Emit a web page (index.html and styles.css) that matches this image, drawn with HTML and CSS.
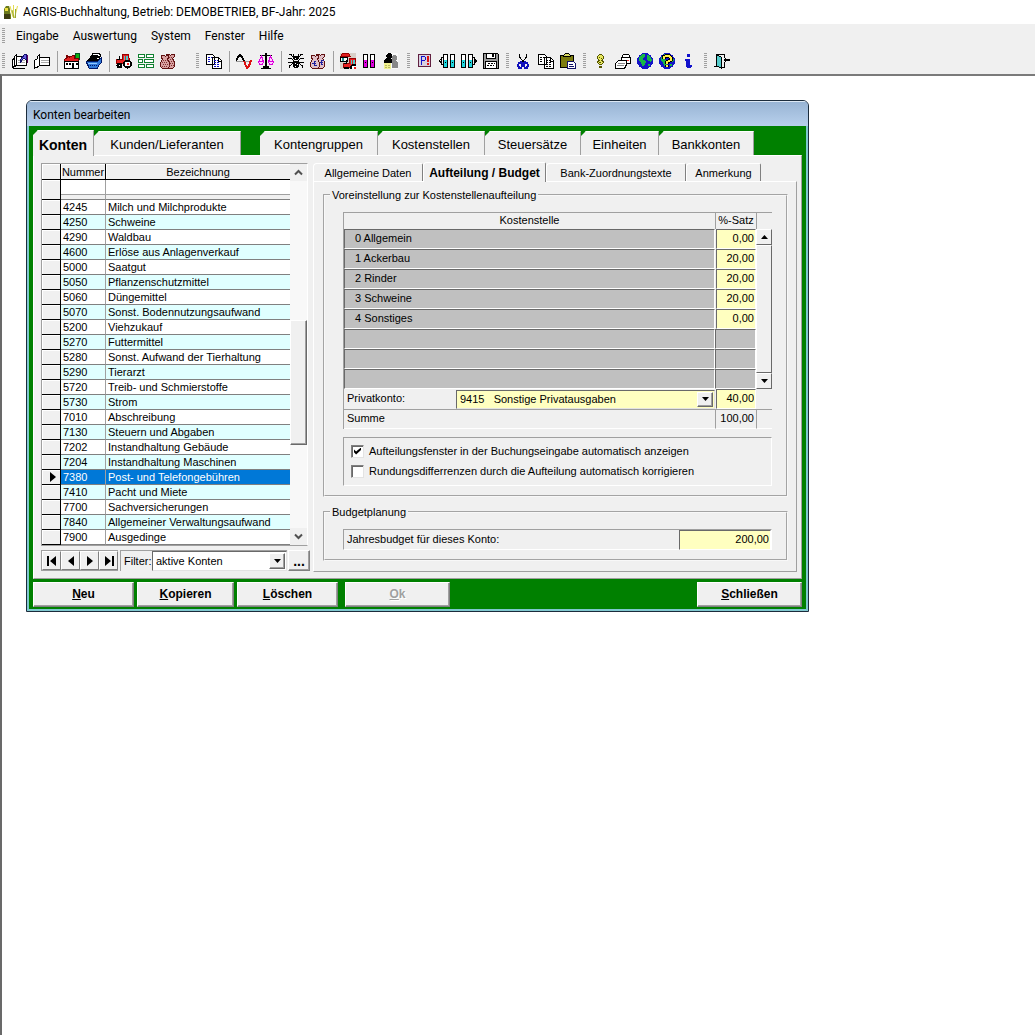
FILE: index.html
```html
<!DOCTYPE html>
<html lang="de">
<head>
<meta charset="utf-8">
<meta name="viewport" content="width=device-width, initial-scale=1">
<title>AGRIS-Buchhaltung, Betrieb: DEMOBETRIEB, BF-Jahr: 2025</title>
<link rel="stylesheet" href="styles.css">
</head>
<body>
<svg class="defs" aria-hidden="true">
  <symbol id="binders" viewBox="0 0 13 16">
    <path fill="#fff" stroke="#000" d="M.5 1.500h4v13h-4zM7.500 1.500h4v13h-4z"/>
    <path class="tint" d="M1 7h3v7H1zM8 7h3v7H8z"/><path stroke="#000" d="M2 9.500h1M9 9.500h1"/>
  </symbol>
  <symbol id="sheets" viewBox="0 0 16 16">
    <path fill="#fff" stroke="#000" d="M.5 1.500h6l2 2v8h-8zM6.500 4.500h6l3 3v8h-9z"/>
    <path class="ink" d="M2 4.500h4M2 6.500h3M2 8.500h3M8 7.500h4M8 9.500h5M8 11.500h6M8 13.500h6" stroke-dasharray="2 1"/>
    <path stroke="#000" d="M12.500 5v3h3"/>
  </symbol>
  <symbol id="sacks" viewBox="0 0 16 16">
    <path class="cloth" stroke="#601010" d="M6.500 1.500h3l1 1 1-1h3v2l-2 2 2 3v5l-2 2h-4l-2-3z"/>
    <path class="cloth" stroke="#601010" d="M1.500 2.500h3l1 1 1-1h2v2l-1 2 2 3v4l-2 2h-5l-2-2v-4l2-3-1-2z"/>
    <path class="marks" stroke-dasharray="1 1" d="M3 7.500h5M2 9.500h6M3 11.500h5M2 13.500h6M9 4.500h4M10 6.500h3M9 8.500h5M10 10.500h4M9 12.500h5"/>
  </symbol>
  <symbol id="tractor" viewBox="0 0 16 16">
    <path fill="#e82020" stroke="#900" d="M.5 6.500h6v-5h6l1 6-4 3h-9z"/>
    <path fill="#50c8c8" d="M8 3h4v4H8z"/>
    <path fill="#e82020" d="M9 3h1v4H9z"/>
    <path stroke="#000" d="M3.500 3v3M1 6.500h3"/>
    <circle cx="11.500" cy="11" r="3.500" fill="#fff" stroke="#000" stroke-width="2"/>
    <circle cx="3.500" cy="12.500" r="2" fill="#fff" stroke="#000" stroke-width="2"/>
    <path fill="#e82020" d="M11 10h2v2h-2z"/>
  </symbol>
  <symbol id="globe" viewBox="0 0 16 16">
    <circle cx="8" cy="8" r="8" fill="#1414c8"/>
    <path fill="#18b848" d="M2 4l3-3h3v2L6 5v2h2l1 2-2 4H5L4 9 2 8zM10 2l3 1 2 4-1 3-2-2-2-1zM11 11h2v2h-2z"/>
  </symbol>
</svg>

<header class="titlebar">
  <svg class="logo" viewBox="0 0 16 16" aria-hidden="true">
    <path fill="#6b7a1c" d="M1 5l2-3h3l1 3v3l1 3v4H1v-4z"/><path fill="#3c3c10" d="M1 10h6v5H1z"/><path fill="#f0e040" d="M2 4h3v3H2z"/>
    <path stroke="#e4dc50" d="M10.500 1v13M14.500 2l-3 12M7 2l3 11"/><path stroke="#98a838" d="M12.500 5v9M9 6l2 8"/>
  </svg>
  <h1>AGRIS-Buchhaltung, Betrieb: DEMOBETRIEB, BF-Jahr: 2025</h1>
</header>

<nav class="menubar">
  <span class="grip"></span>
  <button>Eingabe</button><button>Auswertung</button><button>System</button><button>Fenster</button><button>Hilfe</button>
</nav>

<div class="toolbars">
  <div class="toolbar">
    <span class="grip"></span>
    <button aria-label="Journal"><svg viewBox="0 0 16 16"><path fill="#fff" stroke="#000" d="M4.500 3.500h10v9h-10z"/><path stroke="#aaa" d="M6 7.500h7M6 9.500h7"/><path fill="#fff" stroke="#000" d="M4.500 12.500v-11l-2 2v2l-2 1v8l4-2M1 15.500h12"/><path stroke="#000" d="M2.500 5v9"/><path fill="#6c60e0" stroke="#10106c" d="M8.500 9.500v-3l4-5h2v5l-3-1-2 2z"/><path stroke="#600060" d="M15.500 2v8"/></svg></button>
    <button aria-label="Buch"><svg viewBox="0 0 16 16"><path fill="#fff" stroke="#000" d="M5.500 4.500h10v8h-10z"/><path stroke="#aaa" d="M7 7.500h8M7 9.500h8"/><path fill="#fff" stroke="#000" d="M5.500 12.500v-11l-2 2v2l-3 2v8l5-3zM2 14.500h2"/></svg></button>
    <span class="rule"></span>
    <button aria-label="Betrieb"><svg viewBox="0 0 16 16"><path fill="#10b010" stroke="#052" d="M11.500.5h4v6h-4z"/><path fill="#e02020" stroke="#700" d="M.5 8.500v-2l4-3h1v1l3-2h2v3h4v3z"/><path fill="#fff" stroke="#000" d="M.5 8.500h14v7H.5z"/><path fill="#000" d="M2 10h2v2H2zM5 10h2v2H5zM8 10h2v6H8zM12 10h2v2h-2z"/><path stroke="#700" stroke-width="2" d="M3 2v3"/></svg></button>
    <button aria-label="Kartei"><svg viewBox="0 0 16 16"><path fill="#fff" stroke="#000" d="M6.500.5h7l1 2-1 2h-8zM4.500 3.500h8l1 2-1 2h-9zM2.500 6.500h9v2h-10z"/><path stroke="#000" d="M7 2.500h5M5 5.500h6"/><path fill="#3078d8" stroke="#001868" d="M.5 8.500h11l4-4v5l-3 3-1 3h-8l-2-3z"/><path stroke="#90c8ff" d="M2 10.500h9"/><path stroke="#001868" d="M2 12.500h11" stroke-dasharray="1 1"/></svg></button>
    <span class="rule"></span>
    <button aria-label="Maschinen"><svg viewBox="0 0 16 16"><use href="#tractor"/></svg></button>
    <button aria-label="Felder"><svg viewBox="0 0 16 16"><path fill="#fff" stroke="#108030" d="M.5 1.500h6v3h-6zM8.500 1.500h7v3h-7zM.5 6.500h4v3h-4zM6.500 6.500h9v3h-9zM.5 11.500h6v3h-6zM8.500 11.500h7v3h-7z"/></svg></button>
    <button aria-label="Vorräte"><svg class="sacks-plain" viewBox="0 0 16 16"><use href="#sacks"/></svg></button>
  </div>
  <div class="toolbar toolbar-apart">
    <span class="grip"></span>
    <button aria-label="Belege"><svg class="blue-ink" viewBox="0 0 16 16"><use href="#sheets"/></svg></button>
    <span class="rule"></span>
    <button aria-label="Verlauf"><svg viewBox="0 0 16 16"><path stroke="#999" d="M0 8.500h16"/><path stroke="#000" stroke-width="2" d="M0 8l2-4 2-2 2 2 2 4"/><path stroke="#d11" stroke-width="2" d="M8 8l2 5 1 2 2-2 2-6"/></svg></button>
    <button aria-label="Bilanz"><svg viewBox="0 0 16 16"><path stroke="#000" stroke-width="2" d="M8 0v14M5 14h6"/><path stroke="#000" d="M2 2.500h12M3 15.500h10"/><path fill="#fcf" stroke="#d0d" d="M3.500 3l-3 6 1 2h3l1-2zM12.500 3l-2 6 1 2h3l1-2z"/><path stroke="#d0d" d="M1 8.500h5M10 8.500h5"/></svg></button>
    <span class="rule"></span>
    <button aria-label="Netz"><svg viewBox="0 0 16 16"><path stroke="#000" d="M1 1.500h2l3 4M5.500 1v3M10.500 1v3M15 1.500h-2l-3 4M0 5.500h3l3 2M16 5.500h-3l-3 2M0 9.500h4l2-1M16 9.500h-4l-2-1M1.500 15v-2l4-3M14.500 15v-2l-4-3"/><path fill="#000" d="M6 3h4v4H6zM5 8h6v5l-1 2H6l-1-2z"/><path fill="#fff" d="M7 10h1v1H7zM9 11h1v1H9zM7 13h1v1H7zM7 5h1v1H7z"/></svg></button>
    <button aria-label="Geld"><svg class="sacks-money" viewBox="0 0 16 16"><use href="#sacks"/><path stroke="#2020a0" d="M6 8.500h-2v4h3M2 10.500h4M14 7.500h-3v4h2M10 9.500h3"/></svg></button>
    <span class="rule"></span>
    <button aria-label="Anlagen"><svg viewBox="0 0 16 16"><path fill="#d8d0c8" d="M0 0h16v16H0z"/><path fill="#e02020" stroke="#900" d="M.5 3.500l2-3h6l2 3z"/><path fill="#fff" stroke="#000" d="M.5 4.500h7v4h-7z"/><path fill="#209090" d="M2 5h2v3H2z"/><svg x="3" y="4" width="13" height="12" viewBox="0 0 16 16"><use href="#tractor"/></svg></svg></button>
    <button aria-label="Ordner"><svg class="tint-magenta" viewBox="0 0 16 16"><use href="#binders" x="1" width="13" height="16"/></svg></button>
    <button aria-label="Personen"><svg viewBox="0 0 16 16"><path fill="#f8f8f8" d="M2 0h12v16H2z"/><path fill="#000" d="M2 2l2-2h2l2 2v2L6 6h2v4H0V7l3-2z"/><path fill="#888" d="M8 3l2-1h2l1 2v2l-2 2h2l1 2v5H8V7z"/><path fill="#f0f090" d="M0 10h7v6H0z"/><path stroke="#b8b860" stroke-dasharray="2 1" d="M1 12.500h5M1 14.500h5"/></svg></button>
  </div>
  <div class="toolbar">
    <span class="grip"></span>
    <button aria-label="Programm"><svg viewBox="0 0 16 16"><path fill="#d8d0e0" stroke="#602040" d="M1.500 1.500h12v12h-12z"/><path stroke="#11c" d="M4.500 12V3.500h3l1 1v2l-1 1H4"/><path stroke="#d11" stroke-width="2" d="M11 3v6M11 10v2"/></svg></button>
    <button aria-label="Zurück"><svg class="tint-cyan" viewBox="0 0 16 16"><use href="#binders" x="4" width="13" height="16"/><path stroke="#000" d="M3.500 4l-3 4 3 4M2.500 4.500v7"/></svg></button>
    <button aria-label="Vor"><svg class="tint-cyan" viewBox="0 0 16 16"><use href="#binders" x="0" width="13" height="16"/><path stroke="#000" d="M12.500 4l3 4-3 4M13.500 4.500v7"/></svg></button>
    <button aria-label="Speichern"><svg viewBox="0 0 16 16"><path fill="#999" stroke="#000" d="M.5.5h14l1 1v14H.5z"/><path fill="#fff" stroke="#000" d="M3.500.5h9v5h-9zM2.500 8.500h11v7h-11z"/><path fill="#000" d="M9 1h2v3H9z"/><path stroke="#000" d="M5 10.500h7M4 12.500h7" stroke-dasharray="2 1"/></svg></button>
  </div>
  <div class="toolbar">
    <span class="grip"></span>
    <button aria-label="Ausschneiden"><svg viewBox="0 0 16 16"><path stroke="#000" d="M3.500 1v3l4 5M10.500 1v3l-4 5M7.500 7v2"/><path stroke="#11b" stroke-width="2" d="M6 9l-3 1-1 2 1 3h2l1-2V9M8 9l3 1 1 2-1 3H9l-1-2V9"/></svg></button>
    <button aria-label="Kopieren"><svg class="black-ink" viewBox="0 0 16 16"><use href="#sheets"/></svg></button>
    <button aria-label="Einfügen"><svg viewBox="0 0 16 16"><path fill="#7c7c10" stroke="#000" d="M.5 2.500h13v12H.5z"/><path fill="#dd6" stroke="#000" d="M3.500 3.500v-1l2-2h3l2 2v1z"/><path fill="#fff" stroke="#116" d="M7.500 8.500h6l2 2v5h-8z"/><path stroke="#116" d="M9 11.500h4M9 13.500h5"/></svg></button>
  </div>
  <div class="toolbar">
    <span class="grip"></span>
    <button aria-label="Tipp"><svg viewBox="0 0 16 16"><path fill="#e8e860" stroke="#550" d="M6.500 1.500h2l2 2v2l-2 2 2 1v1l-2 2h-2l-2-2v-1l2-1-2-2v-2z"/><path stroke="#550" d="M6 4.500h1M8 5.500h1M6 9.500h2"/><path fill="#cc3" stroke="#550" d="M6.500 13.500h2v1h-2z"/></svg></button>
    <button aria-label="Drucken"><svg viewBox="0 0 16 16"><path fill="#fff" stroke="#000" d="M6.500 4.500l2-3h5l2 3v6h-9z"/><path stroke="#000" d="M7 4.500h8"/><path stroke="#e33" d="M12 7.500h2"/><path fill="#fff" stroke="#000" d="M.5 10.500l3-3h8v4l-2 4h-9z"/><path stroke="#888" d="M3 10.500h7M2 12.500h7"/></svg></button>
    <button aria-label="Internet"><svg viewBox="0 0 16 16"><use href="#globe"/></svg></button>
    <button aria-label="Hilfe im Internet"><svg viewBox="0 0 16 16"><use href="#globe"/><path stroke="#000" stroke-width="4" d="M5 6V4l2-1h3l2 2v2L8 9v2M8 12v2"/><path stroke="#fe4" stroke-width="2" d="M5 6V4l2-1h3l2 2v2L8 9v2M8 12v2"/></svg></button>
    <button aria-label="Info"><svg viewBox="0 0 16 16"><path fill="#11c" d="M6 1h3v3H6zM4 6h5v6h2v2l-2 1H6l-1-1V8H4z"/></svg></button>
  </div>
  <div class="toolbar">
    <span class="grip"></span>
    <button aria-label="Beenden"><svg viewBox="0 0 16 16"><path stroke="#000" d="M0 13.500h2V1.500h8v3M10.500 9v5h-3"/><path fill="#5cc" stroke="#000" d="M2.500 1.500l5 3v11l-5-3z"/><path fill="#000" d="M9 7l3-3v2h4v2h-4v2z"/></svg></button>
  </div>
</div>

<main class="desktop">
  <section class="window" aria-labelledby="window-title">
    <h2 id="window-title">Konten bearbeiten</h2>
    <div class="window-body">
      <div class="tabs" role="tablist">
        <button role="tab" aria-selected="true">Konten</button>
        <button role="tab">Kunden/Lieferanten</button>
        <span></span>
        <button role="tab">Kontengruppen</button>
        <button role="tab">Kostenstellen</button>
        <button role="tab">Steuersätze</button>
        <button role="tab">Einheiten</button>
        <button role="tab">Bankkonten</button>
      </div>
      <div class="page">
        <div class="accounts">
          <div class="list">
            <table>
              <colgroup><col class="col-mark"><col class="col-number"><col></colgroup>
              <thead><tr><th></th><th>Nummer</th><th>Bezeichnung</th></tr></thead>
              <tbody>
                <tr class="search"><th></th><td></td><td></td></tr>
                <tr><th></th><td>4245</td><td>Milch und Milchprodukte</td></tr>
                <tr><th></th><td>4250</td><td>Schweine</td></tr>
                <tr><th></th><td>4290</td><td>Waldbau</td></tr>
                <tr><th></th><td>4600</td><td>Erlöse aus Anlagenverkauf</td></tr>
                <tr><th></th><td>5000</td><td>Saatgut</td></tr>
                <tr><th></th><td>5050</td><td>Pflanzenschutzmittel</td></tr>
                <tr><th></th><td>5060</td><td>Düngemittel</td></tr>
                <tr><th></th><td>5070</td><td>Sonst. Bodennutzungsaufwand</td></tr>
                <tr><th></th><td>5200</td><td>Viehzukauf</td></tr>
                <tr><th></th><td>5270</td><td>Futtermittel</td></tr>
                <tr><th></th><td>5280</td><td>Sonst. Aufwand der Tierhaltung</td></tr>
                <tr><th></th><td>5290</td><td>Tierarzt</td></tr>
                <tr><th></th><td>5720</td><td>Treib- und Schmierstoffe</td></tr>
                <tr><th></th><td>5730</td><td>Strom</td></tr>
                <tr><th></th><td>7010</td><td>Abschreibung</td></tr>
                <tr><th></th><td>7130</td><td>Steuern und Abgaben</td></tr>
                <tr><th></th><td>7202</td><td>Instandhaltung Gebäude</td></tr>
                <tr><th></th><td>7204</td><td>Instandhaltung Maschinen</td></tr>
                <tr class="current"><th><svg class="marker" viewBox="0 0 6 10"><path d="M0 0l6 5-6 5z"/></svg></th><td>7380</td><td>Post- und Telefongebühren</td></tr>
                <tr><th></th><td>7410</td><td>Pacht und Miete</td></tr>
                <tr><th></th><td>7700</td><td>Sachversicherungen</td></tr>
                <tr><th></th><td>7840</td><td>Allgemeiner Verwaltungsaufwand</td></tr>
                <tr><th></th><td>7900</td><td>Ausgedinge</td></tr>
              </tbody>
            </table>
            <div class="scroll">
              <svg viewBox="0 0 17 17"><path d="M5 10.500l3.500-3.500 3.500 3.500"/></svg>
              <div class="track"><div class="thumb"></div></div>
              <svg viewBox="0 0 17 17"><path d="M5 6.500l3.500 3.500 3.500-3.500"/></svg>
            </div>
          </div>
          <div class="navigator">
            <div class="steps">
              <button aria-label="Erster"><svg viewBox="0 0 12 12"><path d="M1 1h2v10H1zM10 1v10L4 6z"/></svg></button>
              <button aria-label="Voriger"><svg viewBox="0 0 12 12"><path d="M9 1v10L3 6z"/></svg></button>
              <button aria-label="Nächster"><svg viewBox="0 0 12 12"><path d="M3 1v10l6-5z"/></svg></button>
              <button aria-label="Letzter"><svg viewBox="0 0 12 12"><path d="M9 1h2v10H9zM2 1v10l6-5z"/></svg></button>
            </div>
            <div class="filter">
              <label for="filter">Filter:</label>
              <div class="combo">
                <select id="filter"><option>aktive Konten</option></select>
                <span class="drop"><svg viewBox="0 0 7 4"><path d="M0 0h7L3.500 4z"/></svg></span>
              </div>
            </div>
            <button class="more">...</button>
          </div>
        </div>

        <div class="details">
          <div class="subtabs" role="tablist">
            <button role="tab">Allgemeine Daten</button>
            <button role="tab" aria-selected="true">Aufteilung / Budget</button>
            <button role="tab">Bank-Zuordnungstexte</button>
            <button role="tab">Anmerkung</button>
          </div>
          <div class="subpage">
            <fieldset>
              <legend>Voreinstellung zur Kostenstellenaufteilung</legend>
              <table class="costs">
                <colgroup><col class="col-label"><col><col class="col-rate"><col class="col-scroll"></colgroup>
                <thead><tr><th colspan="2">Kostenstelle</th><th>%-Satz</th><th></th></tr></thead>
                <tbody>
                  <tr><td colspan="2" class="cell">0 Allgemein</td><td class="rate"><input aria-label="0 Allgemein" value="0,00"></td>
                    <td rowspan="8" class="bar"><div class="oldscroll">
                      <span class="arrow"><svg viewBox="0 0 7 4"><path d="M0 4h7L3.500 0z"/></svg></span>
                      <span class="slide"></span>
                      <span class="arrow"><svg viewBox="0 0 7 4"><path d="M0 0h7L3.500 4z"/></svg></span>
                    </div></td></tr>
                  <tr><td colspan="2" class="cell">1 Ackerbau</td><td class="rate"><input aria-label="1 Ackerbau" value="20,00"></td></tr>
                  <tr><td colspan="2" class="cell">2 Rinder</td><td class="rate"><input aria-label="2 Rinder" value="20,00"></td></tr>
                  <tr><td colspan="2" class="cell">3 Schweine</td><td class="rate"><input aria-label="3 Schweine" value="20,00"></td></tr>
                  <tr><td colspan="2" class="cell">4 Sonstiges</td><td class="rate"><input aria-label="4 Sonstiges" value="0,00"></td></tr>
                  <tr><td colspan="2" class="cell"></td><td class="cell"></td></tr>
                  <tr><td colspan="2" class="cell"></td><td class="cell"></td></tr>
                  <tr><td colspan="2" class="cell"></td><td class="cell"></td></tr>
                </tbody>
                <tfoot>
                  <tr><td><label for="private">Privatkonto:</label></td>
                    <td class="choice"><div class="combo combo-yellow">
                      <select id="private"><option>9415 &nbsp; Sonstige Privatausgaben</option></select>
                      <span class="drop"><svg viewBox="0 0 7 4"><path d="M0 0h7L3.500 4z"/></svg></span>
                    </div></td>
                    <td class="rate"><input aria-label="Privatkonto Satz" value="40,00"></td><td></td></tr>
                  <tr><td colspan="2">Summe</td><td class="sum">100,00</td><td class="end"></td></tr>
                </tfoot>
              </table>
              <div class="options">
                <label><input type="checkbox" checked>Aufteilungsfenster in der Buchungseingabe automatisch anzeigen</label>
                <label><input type="checkbox">Rundungsdifferrenzen durch die Aufteilung automatisch korrigieren</label>
              </div>
            </fieldset>
            <fieldset>
              <legend>Budgetplanung</legend>
              <div class="budget">
                <label for="budget">Jahresbudget für dieses Konto:</label>
                <input id="budget" value="200,00">
              </div>
            </fieldset>
          </div>
        </div>
      </div>
      <footer class="actions">
        <button><u>N</u>eu</button>
        <button><u>K</u>opieren</button>
        <button><u>L</u>öschen</button>
        <button disabled><u>O</u>k</button>
        <span></span>
        <button><u>S</u>chließen</button>
      </footer>
    </div>
  </section>
</main>
</body>
</html>
```
FILE: styles.css
```css
:root {
  --face: #f0f0f0;
  --shadow: #a0a0a0;
  --dark: #696969;
  --light: #fff;
  --green: #008000;
  --yellow: #ffffc0;
  --classic: "Liberation Sans", Arial, sans-serif;
  --modern: Roboto, "Noto Sans", sans-serif;
}

* { box-sizing: border-box; }

body {
  margin: 0;
  min-height: 100vh;
  display: flex;
  flex-direction: column;
  background: #fff;
  color: #000;
  font: 11px/14px var(--classic);
}

button, input, select {
  margin: 0;
  padding: 0;
  border: 0;
  border-radius: 0;
  background: var(--face);
  color: inherit;
  font: inherit;
}

select { appearance: none; }

.defs { display: none; }
svg { display: block; fill: none; }

/* Application title, menu and tool bars */
.titlebar {
  display: flex;
  align-items: center;
  gap: 4px;
  height: 24px;
  padding-left: 3px;
}
.logo { width: 16px; height: 16px; }
.titlebar h1 {
  margin: 0;
  font: 12px/16px var(--modern);
}

.menubar {
  display: flex;
  align-items: center;
  height: 24px;
  padding-left: 2px;
  background: var(--face);
}
.menubar button {
  padding: 0 7px;
  font: 12px/16px var(--modern);
}

.toolbars {
  display: flex;
  align-items: center;
  height: 26px;
  padding-left: 2px;
  background: var(--face);
}
.toolbar { display: flex; align-items: center; }
.toolbar-apart { margin-left: 13px; }
.toolbar button { padding: 3px; }
.toolbar svg {
  width: 16px;
  height: 16px;
  shape-rendering: crispEdges;
}
.grip {
  width: 3px;
  height: 16px;
  margin: 0 4px;
  background: repeating-linear-gradient(#a0a0a0 0 1px, #f0f0f0 1px 2px);
}
.menubar .grip, .toolbar:first-child .grip { margin-left: 0; }
.rule {
  width: 1px;
  height: 21px;
  margin: 0 3px 0 4px;
  background: var(--shadow);
}

.tint-magenta { color: #e000e0; }
.tint-cyan { color: #20d8e0; }
.tint { fill: currentColor; }
.blue-ink { color: #1010c0; }
.ink { stroke: currentColor; }
.sacks-plain { color: #d8a0a0; --mark: #803030; }
.sacks-money { color: #e0c0c8; --mark: none; }
.cloth { fill: currentColor; }
.marks { stroke: var(--mark); }

/* Workspace with the account window */
.desktop {
  flex: 1;
  padding: 24px;
  border-top: 2px solid #7a7a7a;
  border-left: 2px solid var(--dark);
}

.window {
  max-width: 783px;
  border: 1px solid #1c2c3c;
  border-radius: 6px 6px 0 0;
  background: #b4cdea;
  overflow: hidden;
}
.window h2 {
  margin: 0;
  padding: 6px 6px 3px;
  background: linear-gradient(#dce8f4 0 1px, #98b4d4 1px, #b8d0ec);
  font: 12px/16px var(--modern);
}
.window-body {
  padding: 4px 4px 2px;
  border: solid #80c8d0;
  border-width: 0 2px 2px;
  background: var(--green);
}

.tabs {
  display: grid;
  grid-template-columns: 61px 147px 19px 118px 107px 96px 78px 95px;
  height: 25px;
}
.tabs button {
  margin-top: 1px;
  padding-top: 2px;
  border-right: 1px solid var(--shadow);
  border-top: 1px solid var(--light);
  clip-path: polygon(0 5px, 5px 0, 100% 0, 100% 100%, 0 100%);
  font-size: 13px;
}
.tabs [aria-selected] {
  margin: 0 0 -1px;
  padding-top: 2px;
  position: relative;
  font-size: 14px;
  font-weight: bold;
}

.page {
  display: grid;
  grid-template-columns: 269px 1fr;
  gap: 3px;
  padding: 6px 4px 6px 7px;
  border: 1px solid var(--light);
  border-right-color: var(--shadow);
  border-bottom-color: var(--shadow);
  background: var(--face);
}

/* Account list */
.accounts {
  display: flex;
  flex-direction: column;
  gap: 4px;
  padding-top: 1px;
}
.list {
  display: flex;
  margin-right: 2px;
  border: 1px solid var(--shadow);
  border-right-color: var(--light);
}
table {
  table-layout: fixed;
  border-collapse: separate;
  border-spacing: 0;
}
th, td { padding: 0; font-weight: normal; line-height: 14px; }
.list table { flex: 1; width: 0; }
.col-mark { width: 19px; }
.col-number { width: 45px; }
.list tr { height: 15px; background: #fff; }
.list tbody tr:nth-child(odd) { background: #e0ffff; }
.list td {
  padding-left: 2px;
  border-right: 1px solid var(--shadow);
  border-bottom: 1px solid #808080;
  white-space: nowrap;
}
.list td:last-child { border-right: 0; }
.list th {
  background: var(--face);
  border: 1px solid #000;
  border-width: 0 1px 1px 0;
  box-shadow: inset 1px 1px #fff;
}
.list thead tr { height: 16px; }
.list thead th:last-child { border-right: 0; }
.list tbody tr.search { height: 20px; background: #fff; }
.search td { box-shadow: inset 0 -4px var(--face), inset 0 -5px var(--shadow); }
.list tbody tr.current { background: #0078d7; color: #fff; }
.marker { width: 6px; height: 10px; margin-left: 8px; fill: #000; }

.scroll {
  display: flex;
  flex-direction: column;
  width: 17px;
  background: var(--face);
}
.scroll svg { width: 17px; height: 17px; stroke: #505050; stroke-width: 2; }
.track {
  flex: 1;
  display: grid;
  grid-template-rows: 139fr 125fr 83fr;
  background: #f8f8f8;
}
.thumb, .arrow, .drop, .slide {
  background: var(--face);
  border: 1px solid var(--light);
  border-right-color: var(--dark);
  border-bottom-color: var(--dark);
}
.thumb { grid-row: 2; box-shadow: inset -1px -1px var(--shadow); }

.navigator { display: flex; height: 21px; }
.steps { display: flex; margin-right: 2px; border: 1px solid var(--shadow); border-right: 0; }
.steps button, .more {
  width: 19px;
  border: 1px solid var(--light);
  border-right-color: #808080;
  border-bottom-color: #808080;
}
.steps svg { width: 12px; height: 12px; margin: auto; fill: #000; }
.filter {
  flex: 1;
  display: flex;
  align-items: center;
  justify-content: space-between;
  padding-left: 3px;
  border: 1px solid var(--shadow);
  border-width: 1px 0 0 1px;
}
.more {
  width: 22px;
  margin-left: 1px;
  box-shadow: inset -1px -1px var(--shadow);
  font-size: 14px;
  font-weight: bold;
}

.combo { position: relative; display: flex; width: 135px; height: 20px; }
.combo select {
  flex: 1;
  min-width: 0;
  padding-left: 3px;
  border: 1px solid var(--dark);
  border-right-color: #e3e3e3;
  border-bottom-color: #e3e3e3;
  background: #fff;
}
.drop {
  position: absolute;
  inset: 2px 2px 2px auto;
  display: grid;
  place-content: center;
  width: 16px;
  box-shadow: inset -1px -1px var(--shadow);
  pointer-events: none;
}
.drop svg, .arrow svg { width: 7px; height: 4px; fill: #000; }
.combo-yellow { width: auto; height: 19px; }
.combo-yellow select { padding-bottom: 1px; background: var(--yellow); }

/* Account details */
.subtabs {
  display: grid;
  grid-template-columns: 110px 123px 140px 75px;
  height: 19px;
}
.subtabs button {
  margin-top: 1px;
  border: 1px solid var(--light);
  border-right-color: #808080;
  border-bottom: 0;
  border-radius: 4px 2px 0 0;
}
.subtabs [aria-selected] {
  position: relative;
  margin: 0 0 -1px;
  font-size: 12px;
  font-weight: bold;
}
.subpage {
  display: flex;
  flex-direction: column;
  gap: 8px;
  padding: 6px 8px 10px 9px;
  border: 1px solid var(--light);
  border-right-color: var(--shadow);
  border-bottom-color: var(--shadow);
}
fieldset {
  min-width: 0;
  margin: 0;
  padding: 10px 14px 9px 18px;
  border: 2px groove #f8f8f8;
}
legend { margin-left: -13px; padding: 0 2px; }

.costs {
  width: 100%;
  border-left: 1px solid var(--shadow);
  border-top: 1px solid var(--shadow);
}
.col-label { width: 111px; }
.col-rate { width: 41px; }
.col-scroll { width: 16px; }
.costs tr { height: 20px; }
.costs thead tr { height: 16px; }
.costs th, .costs td { padding-bottom: 2px; }
.costs thead th + th { border-left: 1px solid var(--shadow); }
.costs .cell {
  padding-left: 10px;
  background: #c0c0c0;
  border: 1px solid var(--dark);
  border-bottom-color: var(--light);
  border-right-color: var(--light);
}
.costs .rate, .costs .choice { padding: 0 0 0 1px; }
.costs .bar { height: 160px; padding: 0; }
.rate input, .budget input {
  display: block;
  width: 100%;
  height: 20px;
  padding: 0 1px 2px 0;
  border: 1px solid var(--dark);
  border-bottom-color: var(--light);
  border-right-color: var(--light);
  background: var(--yellow);
  text-align: right;
}
.oldscroll { display: flex; flex-direction: column; height: 160px; }
.arrow { display: grid; place-content: center; height: 16px; }
.slide { flex: 1; }
.costs tfoot td { padding-left: 3px; }
.costs tfoot tr:last-child td { border-top: 1px solid var(--shadow); border-bottom: 1px solid var(--light); }
.costs tfoot .sum { border-left: 1px solid var(--shadow); padding-right: 2px; text-align: right; }
.costs tfoot .end { border-left: 1px solid var(--shadow); }

.options {
  display: grid;
  gap: 6px;
  margin-top: 8px;
  padding: 6px 7px 7px;
}
.options, .budget {
  border: 1px solid var(--shadow);
  border-right-color: var(--light);
  border-bottom-color: var(--light);
}
.options label { display: flex; align-items: center; gap: 5px; }
.options input {
  appearance: none;
  width: 13px;
  height: 13px;
  border: 1px solid #808080;
  border-right-color: #e3e3e3;
  border-bottom-color: #e3e3e3;
  box-shadow: inset 1px 1px var(--dark);
  background: #fff;
}
.options input:checked::before {
  content: "";
  display: block;
  width: 7px;
  height: 7px;
  margin: 2px;
  background: #000;
  clip-path: polygon(0 30%, 30% 58%, 100% 0, 100% 36%, 30% 100%, 0 68%);
}
.budget { display: flex; align-items: center; height: 21px; padding-left: 3px; }
.budget label { flex: 1; padding-bottom: 2px; }
.budget input { width: 92px; }

/* Window actions */
.actions {
  display: grid;
  grid-template-columns: 101px 97px 101px 105px 1fr 105px;
  column-gap: 3px;
  padding-top: 3px;
}
.actions button {
  height: 25px;
  padding-bottom: 2px;
  border: 1px solid var(--light);
  border-right-color: #808080;
  border-bottom-color: #808080;
  box-shadow: inset -1px -1px var(--shadow);
  font-size: 12px;
  font-weight: bold;
}
.actions button:disabled { margin: 0 -4px 0 4px; color: #a0a0a0; text-shadow: 1px 1px #fff; }
```
